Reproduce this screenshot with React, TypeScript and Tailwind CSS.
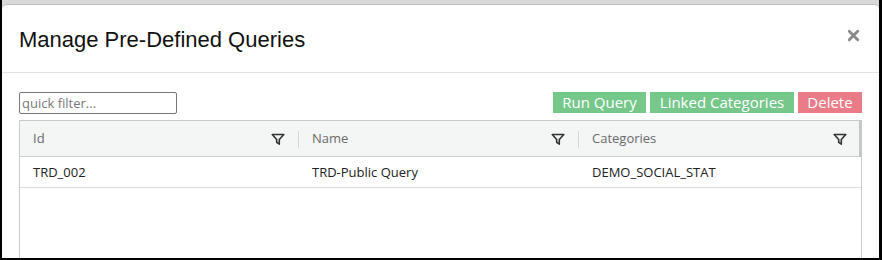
import { X } from "lucide-react";

const cols = [
  { label: "Id", value: "TRD_002" },
  { label: "Name", value: "TRD-Public Query" },
  { label: "Categories", value: "DEMO_SOCIAL_STAT" },
];

function FilterIcon() {
  return (
    <svg width="14" height="13" viewBox="0 0 14 13" className="shrink-0">
      <path d="M1.2 1.5h11.6L8.3 6.5V11.2L5.7 9.4V6.5Z" fill="none" stroke="#333" strokeWidth="1.6" strokeLinejoin="round" />
    </svg>
  );
}

export default function App() {
  return (
    <div className="w-[882px] h-[260px] bg-black pl-[2px] pr-[3px] pb-[2px] overflow-hidden">
      <div className="h-full bg-[#d9d9d9] pt-[4px] flex flex-col">
        <div className="flex-1 bg-white rounded-t-[5px] border-t border-[#bdbdbd] flex flex-col overflow-hidden">
          <div className="h-[68px] border-b border-[#e2e2e2] flex items-center justify-between pl-[17px] pr-[17px] shrink-0">
            <h1 className="text-[22px] text-[#111] font-['Liberation_Sans',Arial,sans-serif] mt-[2px]">
              Manage Pre-Defined Queries
            </h1>
            <X size={17} strokeWidth={4} className="text-[#8a8a8a] -mt-[6px]" />
          </div>

          <div className="flex-1 pl-[17px] pr-[17px] pt-[19px] font-['Open_Sans','Noto_Sans',sans-serif] flex flex-col">
            <div className="flex items-center justify-between h-[22px]">
              <input
                placeholder="quick filter..."
                className="w-[158px] h-[22px] border border-[#767676] rounded-[2px] px-[2px] text-[13px] text-[#333] placeholder:text-[#777] outline-none"
              />
              <div className="flex gap-[4px] h-[21px] self-start">
                <button className="w-[93px] bg-[#75c78a] text-white text-[15px] leading-[21px]">Run Query</button>
                <button className="w-[144px] bg-[#75c78a] text-white text-[15px] leading-[21px]">Linked Categories</button>
                <button className="w-[64px] bg-[#e97c86] text-white text-[15px] leading-[21px]">Delete</button>
              </div>
            </div>

            <div className="mt-[6px] flex-1 border border-[#c9cbcb] border-b-0 relative">
              <div className="grid grid-cols-[279px_280px_1fr] h-[36px] bg-[#f4f5f5] border-b border-[#cfd1d1]">
                {cols.map((c, i) => (
                  <div key={c.label} className="flex items-center pl-[13px] pr-[14px] relative pt-[1px]">
                    <span className="flex-1 text-[13px] text-[#6b6b6b]">{c.label}</span>
                    <FilterIcon />
                    {i < 2 && <div className="absolute right-0 top-[10px] h-[17px] w-px bg-[#d6d8d8]" />}
                  </div>
                ))}
              </div>
              <div className="absolute right-0 top-0 h-[36px] w-[2px] bg-[#c4c6c6]" />
              <div className="grid grid-cols-[279px_280px_1fr] h-[31px] border-b border-[#dcdcdc]">
                {cols.map((c) => (
                  <div key={c.label} className="flex items-center pl-[13px] pt-[1px] text-[13px] text-[#222]">
                    {c.value}
                  </div>
                ))}
              </div>
            </div>
          </div>
        </div>
      </div>
    </div>
  );
}
